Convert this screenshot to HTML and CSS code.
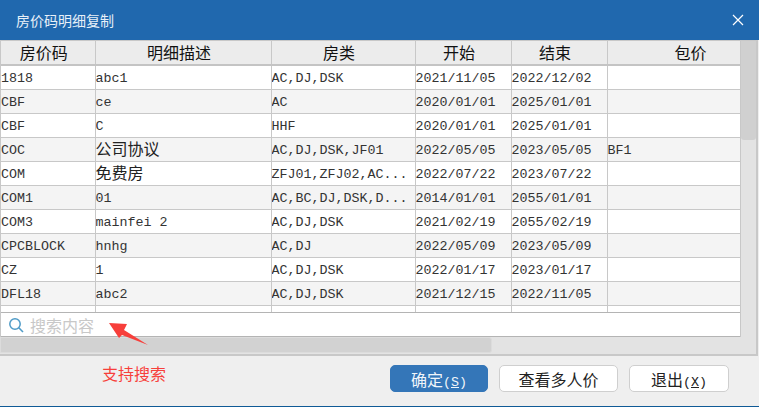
FILE: index.html
```html
<!DOCTYPE html>
<html lang="zh-CN">
<head>
  <meta charset="UTF-8" />
  <title>房价码明细复制</title>
  <link rel="stylesheet" href="styles.css">
</head>
<body>
  <div class="dialog">
    <div class="title-bar">
      <div class="title">房价码明细复制</div>
      <svg class="close-icon" width="12" height="12" viewBox="0 0 12 12"><path d="M1 1l10 10M11 1L1 11" stroke="#fff" stroke-width="1.2" fill="none"/></svg>
    </div>

    <div class="grid-area">
      <div class="grid-left">
        <div class="table-clip">
          <table class="rate-table">
            <colgroup>
              <col class="col-code"><col class="col-desc"><col class="col-room"><col class="col-date"><col class="col-date"><col class="col-pack">
            </colgroup>
            <thead>
              <tr><th>房价码</th><th>明细描述</th><th>房类</th><th>开始</th><th>结束</th><th class="th-pack">包价</th></tr>
            </thead>
            <tbody>
              <tr><td>1818</td><td>abc1</td><td>AC,DJ,DSK</td><td>2021/11/05</td><td>2022/12/02</td><td></td></tr>
              <tr><td>CBF</td><td>ce</td><td>AC</td><td>2020/01/01</td><td>2025/01/01</td><td></td></tr>
              <tr><td>CBF</td><td>C</td><td>HHF</td><td>2020/01/01</td><td>2025/01/01</td><td></td></tr>
              <tr><td>COC</td><td class="cjk">公司协议</td><td>AC,DJ,DSK,JF01</td><td>2022/05/05</td><td>2023/05/05</td><td>BF1</td></tr>
              <tr><td>COM</td><td class="cjk">免费房</td><td>ZFJ01,ZFJ02,AC...</td><td>2022/07/22</td><td>2023/07/22</td><td></td></tr>
              <tr><td>COM1</td><td>01</td><td>AC,BC,DJ,DSK,D...</td><td>2014/01/01</td><td>2055/01/01</td><td></td></tr>
              <tr><td>COM3</td><td>mainfei 2</td><td>AC,DJ,DSK</td><td>2021/02/19</td><td>2055/02/19</td><td></td></tr>
              <tr><td>CPCBLOCK</td><td>hnhg</td><td>AC,DJ</td><td>2022/05/09</td><td>2023/05/09</td><td></td></tr>
              <tr><td>CZ</td><td>1</td><td>AC,DJ,DSK</td><td>2022/01/17</td><td>2023/01/17</td><td></td></tr>
              <tr><td>DFL18</td><td>abc2</td><td>AC,DJ,DSK</td><td>2021/12/15</td><td>2022/11/05</td><td></td></tr>
              <tr class="row-empty"><td></td><td></td><td></td><td></td><td></td><td></td></tr>
            </tbody>
          </table>
        </div>
        <div class="search-box">
          <svg class="search-icon" width="16" height="16" viewBox="0 0 16 16"><circle cx="7" cy="7" r="5.2" stroke="#4f9bc7" stroke-width="1.5" fill="none"/><path d="M10.8 10.8L15 15" stroke="#4f9bc7" stroke-width="1.6" fill="none"/></svg>
          <span class="search-text">搜索内容</span>
        </div>
      </div>
      <div class="v-scroll"><div class="v-thumb"></div></div>
    </div>

    <div class="h-scroll"><div class="h-thumb"></div></div>

    <div class="footer">
      <div class="btn btn-primary"><span class="btn-cjk">确定</span>(<u>S</u>)</div>
      <div class="btn btn-more"><span class="btn-cjk">查看多人价</span></div>
      <div class="btn btn-exit"><span class="btn-cjk">退出</span>(<u>X</u>)</div>
    </div>

    <!-- annotation over the shot -->
    <svg class="note-arrow" width="40" height="23" viewBox="0 0 40 23"><path d="M0 0L18 1L15 7L39 22L13 12L10 15Z" fill="#f73f3b"/></svg>
    <div class="note-text">支持搜索</div>
  </div>
</body>
</html>
```

FILE: styles.css
```css
html, body {
  margin: 0;
  padding: 0;
}
body {
  font-family: "Liberation Mono", "Noto Sans CJK SC", monospace;
  background-color: #efefef;
}
.dialog {
  position: relative;
  width: 759px;
  height: 407px;
  overflow: hidden;
  background-color: #efefef;
  border-bottom: 1px solid #0f5a96;
  box-sizing: border-box;
}
.title-bar {
  display: flex;
  justify-content: space-between;
  align-items: center;
  height: 40px;
  padding: 0 15px 0 16px;
  background-color: #2068ae;
}
.title {
  font-family: "Noto Sans CJK SC", sans-serif;
  font-size: 14px;
  color: #e8f0f8;
}
.grid-area {
  display: flex;
  width: 758px;
  height: 297px;
  box-sizing: border-box;
  border-right: 2px solid #c8c8c8;
}
.grid-left {
  width: 741px;
  border-left: 1px solid #c8c8c8;
  border-right: 1px solid #c8c8c8;
  border-top: 1px solid #c8c8c8;
  box-sizing: border-box;
  background-color: #fff;
}
.table-clip {
  height: 271px;
  overflow: hidden;
  border-bottom: 1px solid #b4b4b4;
}
.rate-table {
  width: 739px;
  table-layout: fixed;
  border-collapse: collapse;
}
.col-code { width: 94px; }
.col-desc { width: 176px; }
.col-room { width: 144px; }
.col-date { width: 96px; }
.col-pack { width: 133px; }
.rate-table th {
  height: 23px;
  padding: 0 8px 0 0;
  font-family: "Noto Sans CJK SC", sans-serif;
  font-size: 16px;
  line-height: 23px;
  font-weight: normal;
  color: #111;
  background-color: #ececec;
  border-right: 1px solid #c8c8c8;
  border-bottom: 2px solid #c4c4c4;
  text-align: center;
}
.rate-table .th-pack { padding: 0 0 0 34px; }
.rate-table td {
  height: 21px;
  padding: 2px 0 0 0;
  font-size: 13.33px;
  line-height: 16px;
  color: #333;
  border-right: 1px solid #c8c8c8;
  border-bottom: 1px solid #c8c8c8;
  white-space: nowrap;
  overflow: hidden;
}
.rate-table tbody tr:nth-child(even) td {
  background-color: #f4f4f4;
}
.rate-table td.cjk {
  height: 20px;
  padding: 0 0 3px 0;
  font-family: "Noto Sans CJK SC", sans-serif;
  font-size: 16px;
  line-height: 16px;
  color: #222;
  overflow: visible;
}
.search-box {
  display: flex;
  align-items: center;
  height: 23px;
  padding-left: 7px;
  gap: 6px;
  border-bottom: 1px solid #b4b4b4;
}
.search-text {
  font-family: "Noto Sans CJK SC", sans-serif;
  font-size: 16px;
  color: #c8c8c8;
}
.v-scroll {
  flex: 1;
  background-color: #e3e3e3;
  border-top: 1px solid #c8c8c8;
}
.v-thumb {
  width: 15px;
  height: 99px;
  background-color: #d0d0d0;
  border-radius: 0 0 3px 3px;
}
.h-scroll {
  width: 758px;
  height: 19px;
  box-sizing: border-box;
  background-color: #e3e3e3;
  border-right: 2px solid #c8c8c8;
  border-bottom: 2px solid #c8c8c8;
}
.h-thumb {
  width: 492px;
  height: 16px;
  box-sizing: border-box;
  background-color: #d2d2d2;
  border: 1px solid #dcdcdc;
  border-radius: 0 3px 3px 0;
}
.footer {
  display: flex;
  gap: 11px;
  padding: 9px 0 0 390px;
}
.btn {
  height: 27px;
  line-height: 26px;
  box-sizing: border-box;
  border-radius: 5px;
  text-align: center;
  font-size: 13.33px;
  color: #222;
  background-color: #fff;
  border: 1px solid #cfcfcf;
}
.btn-cjk {
  font-family: "Noto Sans CJK SC", sans-serif;
  font-size: 16px;
}
.btn-primary {
  width: 98px;
  color: #f0f5fa;
  background-color: #3476b8;
  border-color: #3476b8;
}
.btn-more { width: 119px; }
.btn-exit { width: 100px; }
.note-arrow {
  position: absolute;
  left: 109px;
  top: 323px;
}
.note-text {
  position: absolute;
  left: 102px;
  top: 361px;
  font-family: "Noto Sans CJK SC", sans-serif;
  font-size: 16px;
  color: #f73f3b;
}
.close-icon {
  display: block;
}
```
